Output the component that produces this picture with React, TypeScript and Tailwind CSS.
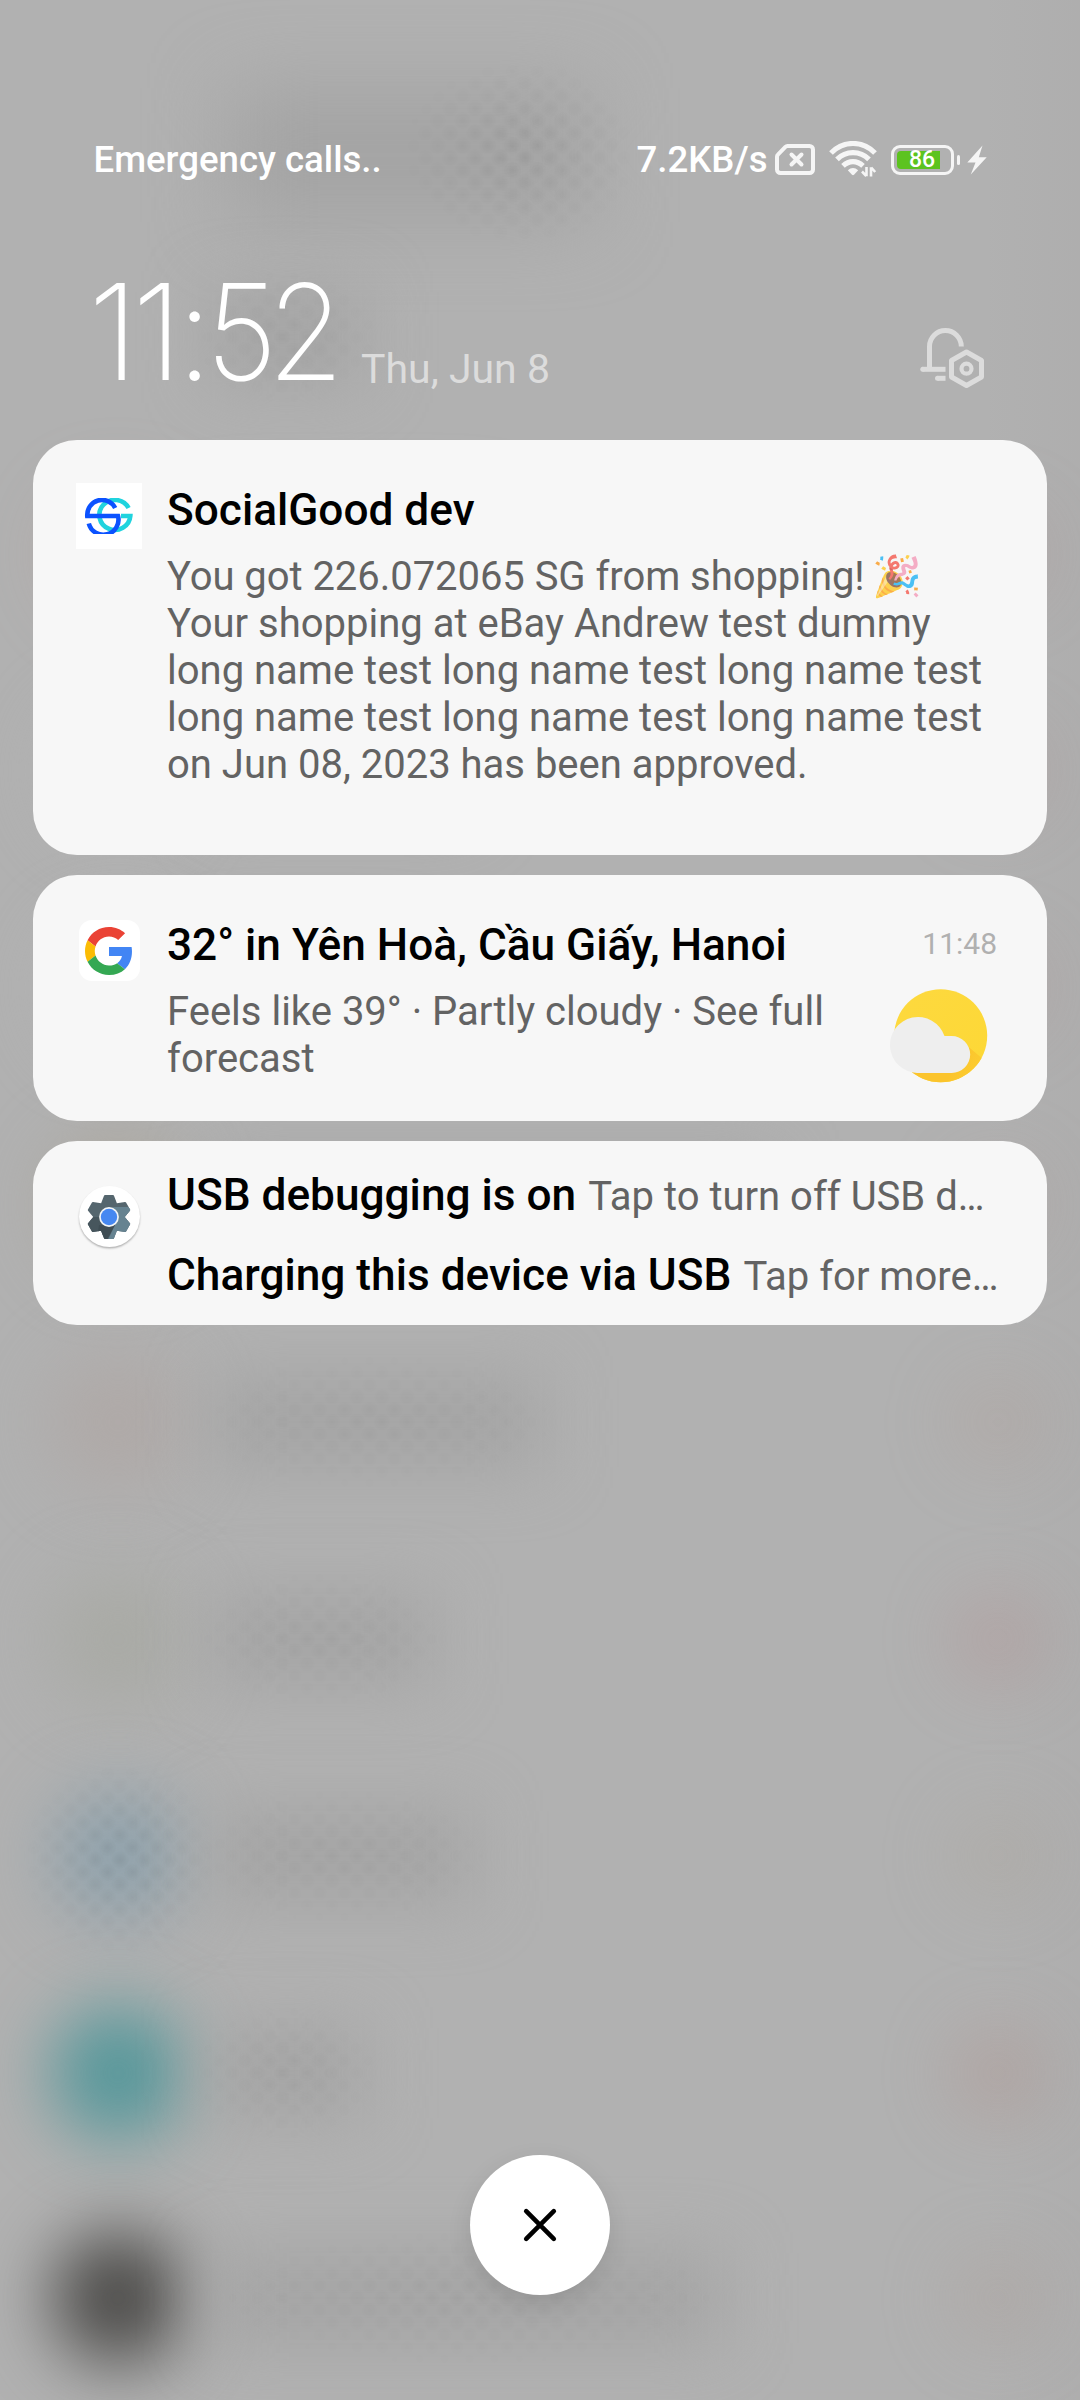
import type { ReactNode } from "react";

const DOTS =
  "[background-image:radial-gradient(circle,rgba(0,0,0,0.06)_0,transparent_9px),radial-gradient(circle,rgba(0,0,0,0.06)_0,transparent_9px)] bg-[length:25px_25px] [background-position:0_0,12.5px_12.5px] [mask-image:radial-gradient(closest-side,black,transparent)]";

/* Contact list that shows, blurred, behind the notification shade */
const rows = [
  { icon: "bg-transparent", bar: "w-[150px]", accent: "bg-transparent" },
  { icon: "bg-[#c09a92]/35", bar: "w-[280px]", accent: "bg-[#b0908e]/25" },
  { icon: "bg-[#b3b3b3]", bar: "w-[260px]", accent: "bg-[#b0908e]/25" },
  { icon: "bg-[#b3b3b3]", bar: "w-[200px]", accent: "bg-[#b0908e]/25" },
  { icon: "bg-[#aba69c]", bar: "w-[560px]", accent: "bg-[#b09a98]/25" },
  { icon: "bg-[#afa9a7]", bar: "w-[330px]", accent: "bg-[#b09a94]/25" },
  { icon: "bg-[#a9aaa5]", bar: "w-[220px]", accent: "bg-[#b39393]/35" },
  { icon: "bg-[#90a2ac]", bar: "w-[260px]", accent: "bg-[#aca59e]/35" },
  { icon: "bg-[#55979a]", bar: "w-[150px]", accent: "bg-[#b09792]/40" },
  { icon: "bg-[#4c4b49]", bar: "w-[510px]", accent: "bg-[#ada29e]/40" },
];

function Backdrop() {
  return (
    <div className="absolute inset-0 overflow-hidden bg-[#b1b1b1]">
      <div className="flex h-[228px] pt-[88px] pl-[230px]">
        <div className="relative h-[134px] w-[360px]">
          <div className="h-full w-full bg-[#a4a4a4] blur-[38px]" />
          <div className={`absolute -top-[30px] left-[170px] h-[190px] w-[240px] ${DOTS}`} />
        </div>
      </div>
      <div>
        {rows.map((r, i) => (
          <div key={i} className="flex h-[217px] items-center pl-[52px] last:mt-[8px]">
            <div className={`size-[132px] shrink-0 rounded-full blur-[34px] ${r.icon}`} />
            <div className={`relative ml-[28px] h-[90px] ${r.bar}`}>
              <div className="h-full w-full bg-[#a5a5a5] blur-[32px]" />
              <div className={`absolute -inset-[30px] opacity-50 ${DOTS}`} />
            </div>
            <div className={`mr-[32px] ml-auto size-[100px] shrink-0 rounded-full blur-[32px] ${r.accent}`} />
          </div>
        ))}
      </div>
      <div className={`absolute top-[1760px] left-[20px] size-[200px] ${DOTS}`} />
      <div className="absolute inset-y-0 right-0 w-[100px] bg-linear-to-l from-[#5a4a4a]/3 to-transparent" />
    </div>
  );
}

function SimIcon() {
  return (
    <svg className="ml-[9px] h-[31px] w-[40px] shrink-0" viewBox="0 0 40 31" fill="none" stroke="#f5f5f5">
      <path d="M12.5 2H34.5a3.5 3.5 0 0 1 3.5 3.5V25.5a3.5 3.5 0 0 1-3.5 3.5H5.5A3.5 3.5 0 0 1 2 25.5V12.800a3 3 0 0 1 .9-2.100l7.500-7.800A3 3 0 0 1 12.500 2Z" strokeWidth="4" />
      <path d="M16.500 10.500l10 10M26.500 10.500l-10 10" strokeWidth="4" strokeLinecap="round" />
    </svg>
  );
}

function WifiIcon() {
  return (
    <svg className="ml-[14px] h-[37px] w-[48px] shrink-0" viewBox="0 0 48 37" fill="none" stroke="#f5f5f5">
      <path d="M2 12C14.500-.7 33.500-.7 46 12" strokeWidth="5.200" />
      <path d="M8 18.300C17 9.300 31 9.300 40 18.300" strokeWidth="5.200" />
      <path d="M14 24.800C20 19.200 28 19.200 34 24.800" strokeWidth="5.200" />
      <path d="M18.800 29.200Q24 25 29.200 29.200L25 33.800Q24 34.600 23 33.800Z" fill="#f5f5f5" stroke="none" />
      <path d="M37.500 26v9.300M37.300 35l-4.300-4.500M42 35.500V26.200M42.200 26.500l4 4.500" strokeWidth="2.600" />
    </svg>
  );
}

function Battery() {
  return (
    <div className="ml-[14px] flex shrink-0 items-center">
      <div className="relative flex h-[30px] w-[63px] items-center rounded-[9px] border-[3.5px] border-[#f5f5f5] pl-[3px]">
        <div className="h-[18px] w-[43px] rounded-l-[4px] bg-[#5cc31f]" />
        <span className="absolute inset-x-0 text-center text-[23px] leading-[24px] font-medium text-white">86</span>
      </div>
      <div className="ml-[3px] h-[10px] w-[3.5px] rounded-full bg-[#f5f5f5]" />
      <svg className="ml-[7px] h-[30px] w-[20px]" viewBox="0 0 20 30" fill="#f5f5f5">
        <path d="M15.500 .5L.3 17.500h8.200L3.800 29.500 19.700 12.300h-7.900Z" />
      </svg>
    </div>
  );
}

function BellSettings() {
  return (
    <svg className="mb-[51px] h-[62px] w-[66px]" viewBox="0 0 66 62" fill="none" stroke="#dcdcdc" strokeWidth="5">
      <path d="M10.500 40V19.500a15.700 15.700 0 0 1 31.800 0" />
      <path d="M3.500 42.300H26.500" strokeLinecap="butt" />
      <circle cx="3.800" cy="42.300" r="2.500" fill="#dcdcdc" stroke="none" />
      <path d="M18.500 51.300H26.500" />
      <circle cx="18.500" cy="51.300" r="2.500" fill="#dcdcdc" stroke="none" />
      <path d="M47.500 25l15 8.500v16.500l-15 8.500-15-8.500v-16.500Z" strokeLinejoin="round" />
      <circle cx="47.500" cy="41.700" r="5" strokeWidth="4.200" />
    </svg>
  );
}

function SocialGoodLogo() {
  return (
    <div className="flex size-[66px] items-center justify-center bg-white">
      <svg className="h-[36px] w-[50px]" viewBox="0 0 50 36" fill="none" strokeWidth="4.600">
        <path d="M44.600 10A15.500 15 0 1 0 46.300 18H37" stroke="#20d3de" />
        <path d="M31.200 10A14.800 15 0 0 0 3.300 18H34A15 15 0 0 1 4.800 25.500" stroke="#0b52ff" />
      </svg>
    </div>
  );
}

function GoogleLogo() {
  return (
    <div className="mx-auto flex size-[61px] items-center justify-center rounded-[13px] bg-white">
      <svg className="size-[48px]" viewBox="0 0 48 48">
        <path fill="#ea4335" d="M24 9.500c3.540 0 6.710 1.220 9.210 3.600l6.850-6.850C35.900 2.380 30.470 0 24 0 14.620 0 6.510 5.380 2.560 13.220l7.980 6.190C12.430 13.720 17.740 9.500 24 9.500z" />
        <path fill="#4285f4" d="M46.980 24.550c0-1.570-.15-3.090-.38-4.550H24v9.020h12.940c-.58 2.960-2.260 5.480-4.780 7.180l7.730 6c4.510-4.180 7.090-10.360 7.090-17.650z" />
        <path fill="#fbbc05" d="M10.530 28.590c-.48-1.450-.76-2.990-.76-4.590s.27-3.140.76-4.590l-7.980-6.190C.92 16.460 0 20.120 0 24c0 3.880.92 7.540 2.560 10.780l7.970-6.190z" />
        <path fill="#34a853" d="M24 48c6.480 0 11.930-2.130 15.890-5.810l-7.730-6c-2.150 1.450-4.920 2.300-8.160 2.300-6.260 0-11.570-4.220-13.470-9.910l-7.980 6.190C6.510 42.620 14.620 48 24 48z" />
      </svg>
    </div>
  );
}

function SettingsLogo() {
  const teeth = [0, 60, 120, 180, 240, 300];
  return (
    <div className="mx-auto flex size-[61px] items-center justify-center rounded-full bg-white shadow-[0_1.5px_2px_rgba(0,0,0,0.28)]">
      <svg className="size-[46px]" viewBox="-23 -23 46 46">
        <defs>
          <clipPath id="teeth">
            <circle r="15.500" />
            {teeth.map((a) => (
              <path key={a} d="M-8.500-12L-5-21.300Q-4.700-22 -4-22H4Q4.700-22 5-21.300L8.500-12Z" transform={`rotate(${a})`} />
            ))}
          </clipPath>
        </defs>
        <g clipPath="url(#teeth)">
          <rect x="-23" y="-23" width="46" height="46" fill="#55666e" />
          <path d="M-23 0H0L-8 23H-23Z" fill="#47565d" />
          <path d="M4-10H23V23H-1L6 8Z" fill="#668391" />
          <path d="M-10 8L6 8-2 23H-12Z" fill="#3f4d54" />
        </g>
        <circle r="9.900" fill="#f2f5f7" />
        <circle r="8.200" fill="#4688f1" />
      </svg>
    </div>
  );
}

function PartlyCloudy() {
  return (
    <svg className="h-[96px] w-[100px]" viewBox="0 0 100 96">
      <defs>
        <linearGradient id="sun" x1="0" y1="0" x2="1" y2="1">
          <stop offset="0" stopColor="#fdd93f" />
          <stop offset="1" stopColor="#fdd835" />
        </linearGradient>
        <linearGradient id="shade" x1="0" y1="0.6" x2="1" y2="0.9">
          <stop offset="0.500" stopColor="#fbc42c" />
          <stop offset="1" stopColor="#fdd233" />
        </linearGradient>
        <clipPath id="disc">
          <circle cx="51.700" cy="47.700" r="46.500" />
        </clipPath>
      </defs>
      <circle cx="51.700" cy="47.700" r="46.500" fill="url(#sun)" />
      <path clipPath="url(#disc)" d="M76 56L100 76V96H32L22 85Z" fill="url(#shade)" />
      <path d="M28 85a28 28 0 1 1 27.500-37h7.200a18.500 18.500 0 0 1 0 37Z" fill="#eeeeee" />
    </svg>
  );
}

function Card({ className, icon, children }: { className: string; icon: ReactNode; children: ReactNode }) {
  return (
    <section className={`flex rounded-[44px] bg-[#f7f7f7] pl-[43px] ${className}`}>
      <div className="w-[66px] shrink-0">{icon}</div>
      <div className="ml-[25px] min-w-0 flex-1">{children}</div>
    </section>
  );
}

function Title({ children }: { children: ReactNode }) {
  return <h2 className="text-[44.2px] leading-[52px] font-medium whitespace-nowrap text-black">{children}</h2>;
}

export default function App() {
  return (
    <main className="relative h-[2400px] w-[1080px] overflow-hidden font-['Roboto','Noto_Color_Emoji',sans-serif]">
      <Backdrop />
      <div className="relative flex h-full flex-col">
        <div className="mt-[137px] flex h-[45px] items-center pr-[93px] pl-[93.5px] text-[36.6px] leading-[44px] font-medium text-white">
          <span>Emergency calls..</span>
          <span className="mr-[-2px] ml-auto">7.2KB/s</span>
          <SimIcon />
          <WifiIcon />
          <Battery />
        </div>

        <header className="flex h-[258px] items-end pr-[95px] pl-[88px]">
          <div className="mb-[58px] w-[273px] font-['Inter'] text-[133px] leading-[100px] font-[230] tracking-[-6.5px] whitespace-nowrap text-white">
            11:
            <span className="inline-block origin-left scale-x-[0.925] tracking-[-10px]">52</span>
          </div>
          <div className="mb-[47px] text-[41px] leading-[48px] whitespace-nowrap text-[#dcdcdc]">Thu, Jun 8</div>
          <div className="ml-auto">
            <BellSettings />
          </div>
        </header>

        <div className="flex flex-col gap-[20px] px-[33px]">
          <Card className="h-[415px] pt-[43px]" icon={<SocialGoodLogo />}>
            <div className="pt-[1px]">
              <Title>SocialGood dev</Title>
            </div>
            <p className="mt-[17px] text-[40px] leading-[47px] whitespace-nowrap text-[#636363]">
              <span className="tracking-[-0.05px]">You got 226.072065 SG from shopping!</span>{" "}
              <span className="-ml-[2px] opacity-70">🎉</span>
              <br />
              Your shopping at eBay Andrew test dummy
              <br />
              long name test long name test long name test
              <br />
              long name test long name test long name test
              <br />
              on Jun 08, 2023 has been approved.
            </p>
          </Card>

          <Card className="h-[246px] pt-[45px] pr-[50px]" icon={<GoogleLogo />}>
            <div className="-mt-[1px] flex items-start justify-between">
              <Title>32° in Yên Hoà, Cầu Giấy, Hanoi</Title>
              <time className="mt-[7px] text-[30px] leading-[36px] text-[#b0b0b0]">11:48</time>
            </div>
            <div className="mt-[17px] flex justify-between pr-[8px]">
              <p className="text-[40px] leading-[47px] whitespace-nowrap text-[#636363]">
                Feels like 39° · Partly cloudy · See full
                <br />
                forecast
              </p>
              <PartlyCloudy />
            </div>
          </Card>

          <Card className="h-[184px] pt-[28px]" icon={<div className="mt-[17px]"><SettingsLogo /></div>}>
            <div className="flex flex-col gap-[27px]">
              <div className="flex h-[53px] items-baseline gap-[12px]">
                <Title>USB debugging is on</Title>
                <p className="text-[40px] leading-[52px] whitespace-nowrap text-[#636363]">Tap to turn off USB d…</p>
              </div>
              <div className="flex h-[53px] items-baseline gap-[12px]">
                <Title>Charging this device via USB</Title>
                <p className="text-[40px] leading-[52px] whitespace-nowrap text-[#636363]">Tap for more…</p>
              </div>
            </div>
          </Card>
        </div>

        <button
          aria-label="Clear notifications"
          className="mx-auto mt-auto mb-[105px] flex size-[140px] items-center justify-center rounded-full bg-white shadow-[0_8px_24px_rgba(0,0,0,0.1)]"
        >
          <svg className="size-[36px]" viewBox="0 0 36 36" stroke="black" strokeWidth="4.600" strokeLinecap="round">
            <path d="M4.200 4.200L31.800 31.800M31.800 4.200L4.200 31.800" />
          </svg>
        </button>
      </div>
    </main>
  );
}
